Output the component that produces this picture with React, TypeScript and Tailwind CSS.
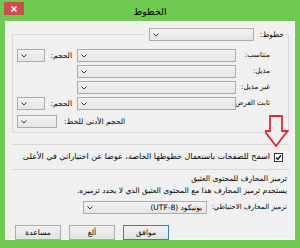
import React from 'react';

const Chevron = () => (
  <svg width="6" height="4" viewBox="0 0 6 4" className="shrink-0">
    <path d="M0.5 0.5 L3 3 L5.5 0.5" fill="none" stroke="#333" strokeWidth="1" />
  </svg>
);

const Select: React.FC<{ w: string; value?: string }> = ({ w, value }) => (
  <div
    className={`${w} h-[13px] shrink-0 border border-[#acacac] bg-gradient-to-b from-[#f2f2f2] to-[#e5e5e5] flex items-center justify-between pr-[4px] pl-[3px]`}
  >
    <span className="text-[7.5px] leading-none text-black whitespace-nowrap">{value}</span>
    <Chevron />
  </div>
);

const Row: React.FC<{ label: string; size?: boolean }> = ({ label, size }) => (
  <div className="h-[13px] flex items-center pr-[18px] pl-[4px]">
    <span className="w-[34px] shrink-0 whitespace-nowrap text-[7px]">{label}</span>
    <Select w="w-[159px]" />
    {size && (
      <>
        <span className="w-[26px] mr-[5px] shrink-0 whitespace-nowrap">الحجم:</span>
        <span className="w-[1px] shrink-0" />
        <Select w="w-[28px]" />
      </>
    )}
  </div>
);

const Button: React.FC<{ label: string; primary?: boolean }> = ({ label, primary }) => (
  <button
    className={`h-[15px] w-[46px] text-[7.5px] leading-none bg-gradient-to-b from-[#f0f0f0] to-[#e3e3e3] border ${
      primary ? 'border-[#3c7fb1]' : 'border-[#acacac]'
    }`}
  >
    {label}
  </button>
);

export default function App() {
  return (
    <div
      className="w-[300px] h-[248px] bg-[#6fc950] flex flex-col overflow-hidden text-black"
      style={{ fontFamily: '"DejaVu Sans", sans-serif' }}
    >
      <div className="h-[21px] shrink-0 flex items-start">
        <div className="mt-[2px] ml-[4px] w-[20px] h-[13px] bg-[#c9504f] flex items-center justify-center">
          <svg width="6" height="6" viewBox="0 0 6 6">
            <path d="M0.5 0.5 L5.5 5.5 M5.5 0.5 L0.5 5.5" stroke="#fff" strokeWidth="1.4" />
          </svg>
        </div>
        <div className="flex-1 pr-[24px] text-center text-[9.5px] leading-none pt-[7px]" dir="rtl">
          الخطوط
        </div>
      </div>

      <div
        dir="rtl"
        className="relative mx-[5px] h-[219px] shrink-0 bg-[#f0f0f0] border border-[#fafafa] text-[7.5px] leading-none pt-[6px]"
      >
        <fieldset className="mr-[5px] ml-[6px] border border-[#d8d8d8] pb-[4px]">
          <legend className="mr-[3px] pl-[4px] flex items-center gap-[6px]">
            <span className="pr-[1px]">خطوط:</span>
            <Select w="w-[105px]" />
          </legend>
          <div className="flex flex-col gap-[3px] mt-[8px]">
            <Row label="متناسب:" size />
            <Row label="مذيل:" />
            <Row label="غير مذيل:" />
            <Row label="ثابت العرض:" size />
            <div className="h-[13px] mt-[2px] flex items-center justify-end gap-[7px] pl-[4px]">
              <span className="whitespace-nowrap">الحجم الأدنى للخط:</span>
              <Select w="w-[40px]" />
            </div>
          </div>
        </fieldset>

        <div className="mt-[11px] mr-[5px] ml-[6px] h-[26px] border-y border-[#d8d8d8] flex items-center gap-[4px] pr-[6px]">
          <div className="w-[9px] h-[9px] shrink-0 border border-[#333] bg-white flex items-center justify-center">
            <svg width="7" height="7" viewBox="0 0 7 7">
              <path d="M1 3.5 L2.8 5.5 L6 1.2" fill="none" stroke="#111" strokeWidth="1.3" />
            </svg>
          </div>
          <span className="whitespace-nowrap text-[8px]">اسمح للصفحات باستعمال خطوطها الخاصة، عوضا عن اختياراتي في الأعلى</span>
        </div>

        <div className="pr-[7px] pl-[8px] mt-[5px] flex flex-col">
          <div className="h-[10px] whitespace-nowrap">ترميز المحارف للمحتوى العتيق</div>
          <div className="h-[10px] mt-[2px] whitespace-nowrap">
            يستخدم ترميز المحارف هذا مع المحتوى العتيق الذي لا يحدد ترميزه.
          </div>
          <div className="mt-[4px] flex items-center gap-[4px]">
            <span className="whitespace-nowrap text-[7px]">ترميز المحارف الاحتياطي:</span>
            <Select w="w-[124px]" value="يونيكود (UTF-8)" />
          </div>
        </div>

        <div className="mt-[11px] flex justify-end gap-[8px] pl-[9px]">
          <Button label="موافق" primary />
          <Button label="ألغ" />
          <Button label="مساعدة" />
        </div>

        <svg
          className="absolute left-[259px] top-[93px]"
          width="24"
          height="32"
          viewBox="0 0 24 32"
        >
          <path
            d="M5 1 L17 1 L17 16 L22.5 16 L11 31 L-0.5 16 L5 16 Z"
            fill="#f0f0f0"
            stroke="#dd2a2f"
            strokeWidth="1.8"
            strokeLinejoin="miter"
          />
        </svg>
      </div>
    </div>
  );
}
